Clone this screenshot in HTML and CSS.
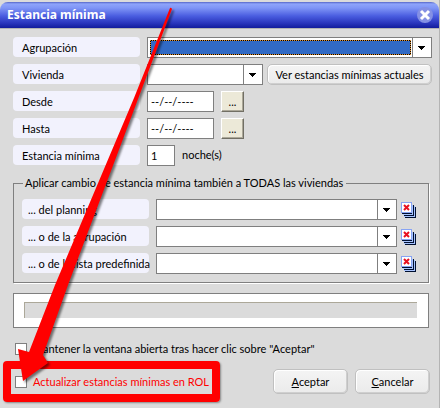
FILE: index.html
```html
<!DOCTYPE html>
<html lang="es">
<head>
    <meta charset="UTF-8">
    <meta name="viewport" content="width=device-width, initial-scale=1.0">
    <title>Estancia mínima</title>
    <link rel="stylesheet" href="styles.css">
</head>
<body>
    <div class="dialog">
        <div class="titlebar">
            <h1>Estancia mínima</h1>
            <button class="close" type="button" aria-label="Cerrar">
                <svg width="16" height="16" viewBox="0 0 16 16">
                    <circle cx="8" cy="8" r="8" fill="#8490e4"/>
                    <path d="M4 4L12 12M12 4L4 12" stroke="#fff" stroke-width="3"/>
                </svg>
            </button>
        </div>

        <form class="content">
            <div class="row">
                <label class="caption" for="agrupacion">Agrupación</label>
                <div class="combo focused"><select id="agrupacion"><option></option></select></div>
            </div>
            <div class="row">
                <label class="caption" for="vivienda">Vivienda</label>
                <div class="combo"><select id="vivienda"><option></option></select></div>
                <button class="btn btn-wide" type="button">Ver estancias mínimas actuales</button>
            </div>
            <div class="row">
                <label class="caption" for="desde">Desde</label>
                <input class="text date" type="text" id="desde" value="--/--/----">
                <button class="pick" type="button">...</button>
            </div>
            <div class="row">
                <label class="caption" for="hasta">Hasta</label>
                <input class="text date" type="text" id="hasta" value="--/--/----">
                <button class="pick" type="button">...</button>
            </div>
            <div class="row">
                <label class="caption" for="noches">Estancia mínima</label>
                <input class="text nights" type="text" id="noches" value="1">
                <span>noche(s)</span>
            </div>

            <fieldset class="group">
                <legend>Aplicar cambio de estancia mínima también a TODAS las viviendas</legend>
                <div class="row">
                    <label class="caption" for="planning">... del planning</label>
                    <div class="combo"><select id="planning"><option></option></select></div>
                    <button class="clear" type="button" aria-label="Borrar"><svg width="15" height="16"><use href="#pages"/></svg></button>
                </div>
                <div class="row">
                    <label class="caption" for="agrupacion2">... o de la agrupación</label>
                    <div class="combo"><select id="agrupacion2"><option></option></select></div>
                    <button class="clear" type="button" aria-label="Borrar"><svg width="15" height="16"><use href="#pages"/></svg></button>
                </div>
                <div class="row">
                    <label class="caption" for="lista">... o de la lista predefinida</label>
                    <div class="combo"><select id="lista"><option></option></select></div>
                    <button class="clear" type="button" aria-label="Borrar"><svg width="15" height="16"><use href="#pages"/></svg></button>
                </div>
            </fieldset>

            <div class="progress"><div class="track"></div></div>

            <label class="check"><input type="checkbox">Mantener la ventana abierta tras hacer clic sobre "Aceptar"</label>

            <div class="footer">
                <label class="check rol"><input type="checkbox">Actualizar estancias mínimas en ROL</label>
                <button class="btn" type="submit"><u>A</u>ceptar</button>
                <button class="btn" type="button"><u>C</u>ancelar</button>
            </div>
        </form>

        <!-- flecha hacia la casilla ROL -->
        <svg class="arrow" width="200" height="400" viewBox="0 0 200 400">
            <path d="M170 8Q171 7 172 9L68 285L43 355L48 363L23 381L18 349L29 352L55 285L134 98Z" fill="#f00"/>
        </svg>
    </div>

    <svg width="0" height="0" class="defs">
        <symbol id="pages" viewBox="0 0 15 16">
            <path d="M4 5H15V16H4Z" fill="#001030"/>
            <path d="M3 4H14V15H3Z" fill="#a8c4ff"/>
            <path d="M3 3H13V14H3Z" fill="#001030"/>
            <path d="M2 3H12V13H2Z" fill="#a8c4ff"/>
            <path d="M1 2H11V12H1Z" fill="#001030"/>
            <path d="M0 0H11V11H0Z" fill="#88a4f4"/>
            <path d="M1 1H10V10H1Z" fill="#fff"/>
            <path d="M3 3L8 8M8 3L3 8" stroke="#e81020" stroke-width="2"/>
        </symbol>
    </svg>
</body>
</html>
```

FILE: styles.css
```css
* {
    box-sizing: border-box;
}
body {
    margin: 0;
    background: #dbdbdb;
    font: 11px/20px Lato, "Liberation Sans", sans-serif;
    color: #000;
}
input, select, button {
    font: inherit;
    color: inherit;
    margin: 0;
}
.dialog {
    position: relative;
    min-height: 100vh;
    padding-top: 2px;
    border-right: 1px solid #b4b4b4;
}

/* barra de titulo */
.titlebar {
    display: flex;
    align-items: center;
    justify-content: space-between;
    height: 26px;
    padding: 0 6px 0 7px;
    border-radius: 8px 8px 0 0;
    background: linear-gradient(#5566c8, #8ea4fb 2px, #7f95f6 6px, #4a5de0 14px, #2a36bd 21px, #121c9c);
    box-shadow: 0 1px 0 #b4b4b4;
}
.titlebar h1 {
    margin: 0;
    color: #fff;
    font: bold 12px/24px "Noto Sans", sans-serif;
}
.close {
    display: flex;
    padding: 0;
    border: 0;
    background: none;
}

.content {
    padding: 9px 7px 0 13px;
}
.row {
    display: flex;
    gap: 7px;
    height: 21px;
    margin-bottom: 6px;
}
.caption {
    flex: none;
    width: 127px;
    height: 20px;
    padding-left: 9px;
    border-radius: 4px;
    background: #f2f2fd;
    line-height: 21px;
    white-space: nowrap;
}
.group .caption {
    padding-left: 6px;
}

/* listas desplegables */
.combo {
    display: flex;
    flex: 1;
    border: 1px solid #7f7f7f;
    background: #fff;
}
.combo select {
    flex: 1;
    min-width: 0;
    border: 0;
    outline: 0;
    padding: 0 3px;
    background: none;
    appearance: none;
}
.combo::after {
    content: "";
    width: 18px;
    border-left: 1px solid #7f7f7f;
    background:
        linear-gradient(#000, #000) 5px 8px / 7px 1px,
        linear-gradient(#000, #000) 6px 9px / 5px 1px,
        linear-gradient(#000, #000) 7px 10px / 3px 1px,
        linear-gradient(#000, #000) 8px 11px / 1px 1px;
    background-repeat: no-repeat;
}
.focused select {
    margin: 2px 1px 2px 2px;
    border: 1px dotted #e09030;
    background: linear-gradient(#316ac5, #316ac5) padding-box, #000;
}

.text {
    border: 1px solid #7f7f7f;
    padding: 0 3px;
    background: #fff;
}
.date {
    width: 67px;
}
.nights {
    width: 28px;
}
.pick {
    width: 23px;
    padding: 0;
    border: 1px solid;
    border-color: #fff #716f64 #716f64 #fff;
    box-shadow: inset -1px -1px 0 #aca899;
    background: #ece9d8;
    line-height: 18px;
}
.btn {
    width: 75px;
    height: 25px;
    padding: 0;
    border: 1px solid #c0c0c0;
    border-radius: 5px;
    box-shadow: inset 1px 1px 0 #fff, inset -1px -1px 0 #cfcfcf;
    background: linear-gradient(#f4f4f4, #ebebeb);
    white-space: nowrap;
}
.btn-wide {
    width: 165px;
    height: 21px;
    margin-left: -3px;
    line-height: 19px;
}

.group {
    margin: 10px 3px 0 0;
    padding: 9px 12px 2px 8px;
    border: 1px solid #7f7f7f;
    box-shadow: 1px 1px 0 #fff;
}
.group legend {
    margin-left: 1px;
    padding: 0 3px 0 2px;
    line-height: 14px;
}
.group .combo {
    margin-right: -3px;
}
.clear {
    display: flex;
    align-items: center;
    padding: 0;
    border: 0;
    background: none;
}

.progress {
    margin: 10px 3px 0 0;
    padding: 8px 11px 9px 10px;
    border: 1px solid #7f7f7f;
    background: #fff;
}
.track {
    height: 16px;
    border-top: 1px solid #aca899;
    border-left: 1px solid #aca899;
    background: #dbdbdb;
}

.check {
    display: flex;
    align-items: center;
    gap: 6px;
    margin: 11px 0 0 2px;
    white-space: nowrap;
}
.check input {
    flex: none;
    width: 12px;
    height: 12px;
    border: 1px solid #7f7f7f;
    background: #fff;
    appearance: none;
}
.footer {
    display: flex;
    align-items: center;
    gap: 7px;
    margin: 2px 2px 0 -10px;
}
.rol {
    width: 217px;
    height: 41px;
    margin: 0 auto 0 0;
    padding-left: 4px;
    border: 8px solid #f00;
    border-radius: 4px;
    box-shadow: 1px 1px 2px #888;
    color: #f00;
}

/* dibujo encima del formulario */
.arrow {
    position: absolute;
    left: 0;
    top: 0;
    pointer-events: none;
    filter: drop-shadow(2px 2px 1px rgba(0, 0, 0, 0.5));
}
.defs {
    position: absolute;
}
```
